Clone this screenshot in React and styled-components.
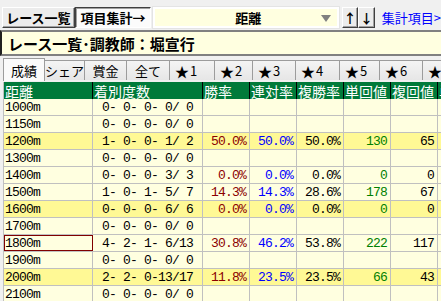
import React from "react";
import styled, { createGlobalStyle } from "styled-components";

const Global = createGlobalStyle`
  html, body { margin: 0; padding: 0; background: #f0f0f0; overflow: hidden; }
  body { font-family: "Noto Sans CJK JP", "Liberation Sans", sans-serif; }
`;

const Page = styled.div`
  width: 441px;
  height: 301px;
  overflow: hidden;
  background: #f0f0f0;
  padding-top: 7px;
  box-sizing: border-box;
`;

const Toolbar = styled.div`
  display: flex;
  align-items: stretch;
  height: 21px;
  padding-left: 2px;
  white-space: nowrap;
`;

const ToolButton = styled.div`
  display: flex;
  align-items: center;
  justify-content: center;
  box-sizing: border-box;
  width: ${(p) => p.$w}px;
  margin-right: ${(p) => p.$mr || 0}px;
  font-size: 13px;
  font-weight: bold;
  color: #000;
  background: ${(p) => (p.$pressed ? "#fbfbfb" : "#ececec")};
  border-style: solid;
  border-width: 1px;
  border-color: ${(p) =>
    p.$pressed ? "#404040 #ffffff #ffffff #404040" : "#ffffff #404040 #404040 #ffffff"};
  box-shadow: ${(p) =>
    p.$pressed ? "inset 1px 1px 0 #a0a0a0" : "inset -1px -1px 0 #a0a0a0"};
`;

const Dropdown = styled.div`
  position: relative;
  box-sizing: border-box;
  width: 189px;
  margin: 0 3px 0 2px;
  background: #ffffe0;
  border: 2px solid #ffffff;
  outline: 1px solid #e4e4e4;
  display: flex;
  align-items: center;
  padding-left: 80px;
  font-size: 13px;
  font-weight: bold;
`;

const DropArrow = styled.svg`
  position: absolute;
  right: 6px;
  top: 6px;
`;

const LinkText = styled.div`
  display: flex;
  align-items: center;
  margin-left: 7px;
  color: #0000ff;
  font-size: 13px;
`;

const TitleBox = styled.div`
  margin-top: 2px;
  height: 26px;
  box-sizing: border-box;
  background: #ffffe0;
  border-top: 2px solid #808080;
  border-bottom: 2px solid #808080;
  border-left: 2px solid #202020;
  display: flex;
  align-items: center;
  padding-left: 6px;
  font-size: 15px;
  font-weight: bold;
  color: #000;
  white-space: nowrap;
`;

const TabStrip = styled.div`
  display: flex;
  align-items: flex-end;
  height: 23px;
  padding-left: 3px;
  margin-top: 1px;
  white-space: nowrap;
`;

const Tab = styled.div`
  box-sizing: border-box;
  flex: none;
  width: ${(p) => p.$w}px;
  height: ${(p) => (p.$active ? 23 : 20)}px;
  display: flex;
  align-items: center;
  justify-content: ${(p) => (p.$center ? "center" : "flex-start")};
  padding-left: ${(p) => (p.$center ? 0 : 5)}px;
  font-size: 13px;
  color: #000;
  background: ${(p) => (p.$active ? "#fafafa" : "linear-gradient(#f4f4f4, #e6e6e6)")};
  border: 1px solid #9c9c9c;
  border-bottom: none;
  border-left: ${(p) => (p.$first || p.$active ? "1px solid #9c9c9c" : "none")};
  margin-bottom: ${(p) => (p.$active ? -1 : 0)}px;
  z-index: ${(p) => (p.$active ? 1 : 0)};
`;

const Star = styled.span`
  font-size: 14px;
  margin-right: 1px;
`;

const Table = styled.div`
  margin-top: 2px;
  margin-left: 3px;
  border-left: 1px solid #c0c0c0;
  width: 540px;
`;

const Row = styled.div`
  display: flex;
  height: 17px;
  box-sizing: border-box;
  background: ${(p) => (p.$head ? "#007a3a" : p.$hl ? "#fff995" : "#ffffe0")};
  border-bottom: ${(p) => (p.$head ? "none" : "1px solid #c0c0c0")};
`;

const Cell = styled.div`
  position: relative;
  box-sizing: border-box;
  flex: none;
  width: ${(p) => p.$w}px;
  border-right: 1px solid ${(p) => (p.$head ? "#000" : "#c0c0c0")};
  display: flex;
  align-items: center;
  justify-content: ${(p) => (p.$align === "right" ? "flex-end" : p.$align === "center" ? "center" : "flex-start")};
  padding: 0 ${(p) => (p.$align === "right" ? 3 : 0)}px 0 ${(p) => (p.$align === "left" ? 1 : 0)}px;
  font-family: ${(p) =>
    p.$head ? '"Noto Sans CJK JP", sans-serif' : '"Liberation Mono", "Noto Sans CJK JP", monospace'};
  font-size: ${(p) => (p.$head ? 14 : 13)}px;
  letter-spacing: ${(p) => (p.$head ? 0 : -0.8)}px;
  color: ${(p) => (p.$head ? "#fff" : p.$color || "#000")};
  white-space: pre;
  overflow: hidden;
  outline: ${(p) => (p.$focus ? "1px solid #800000" : "none")};
  outline-offset: -1px;
`;

const widths = [89, 110, 47, 47, 47, 47, 47, 47];
const heads = ["距離", "着別度数", "勝率", "連対率", "複勝率", "単回値", "複回値", "単"];

const rows = [
  ["1000m", "0- 0- 0- 0/ 0", "", "", "", "", ""],
  ["1150m", "0- 0- 0- 0/ 0", "", "", "", "", ""],
  ["1200m", "1- 0- 0- 1/ 2", "50.0%", "50.0%", "50.0%", "130", "65", true],
  ["1300m", "0- 0- 0- 0/ 0", "", "", "", "", ""],
  ["1400m", "0- 0- 0- 3/ 3", "0.0%", "0.0%", "0.0%", "0", "0"],
  ["1500m", "1- 0- 1- 5/ 7", "14.3%", "14.3%", "28.6%", "178", "67"],
  ["1600m", "0- 0- 0- 6/ 6", "0.0%", "0.0%", "0.0%", "0", "0", true],
  ["1700m", "0- 0- 0- 0/ 0", "", "", "", "", ""],
  ["1800m", "4- 2- 1- 6/13", "30.8%", "46.2%", "53.8%", "222", "117", false, true],
  ["1900m", "0- 0- 0- 0/ 0", "", "", "", "", ""],
  ["2000m", "2- 2- 0-13/17", "11.8%", "23.5%", "23.5%", "66", "43", true],
  ["2100m", "0- 0- 0- 0/ 0", "", "", "", "", ""],
];

const colors = ["#000", "#000", "#8b0000", "#0000ff", "#000", "#008000", "#000", "#000"];

const tabs = [
  { label: "成績", w: 42, active: true, first: true },
  { label: "シェア", w: 40 },
  { label: "賞金", w: 42 },
  { label: "全て", w: 43 },
  { label: "1", star: true, w: 45 },
  { label: "2", star: true, w: 38 },
  { label: "3", star: true, w: 43 },
  { label: "4", star: true, w: 44 },
  { label: "5", star: true, w: 40 },
  { label: "6", star: true, w: 43 },
  { label: "", star: true, w: 40 },
];

export default function App() {
  return (
    <Page>
      <Global />
      <Toolbar>
        <ToolButton $w={75}>レース一覧</ToolButton>
        <ToolButton $w={79} $pressed>項目集計→</ToolButton>
        <Dropdown>
          距離
          <DropArrow width="10" height="8" viewBox="0 0 10 8">
            <polygon points="0,0 10,0 5,7" fill="#808080" />
          </DropArrow>
        </Dropdown>
        <ToolButton $w={17}>↑</ToolButton>
        <ToolButton $w={17}>↓</ToolButton>
        <LinkText>集計項目&gt;</LinkText>
      </Toolbar>
      <TitleBox>レース一覧･調教師：堀宣行</TitleBox>
      <TabStrip>
        {tabs.map((t, i) => (
          <Tab key={i} $w={t.w} $active={t.active} $first={t.first} $center={!t.star}>
            {t.star && <Star>★</Star>}
            {t.label}
          </Tab>
        ))}
      </TabStrip>
      <Table>
        <Row $head>
          {heads.map((h, i) => (
            <Cell key={i} $head $w={widths[i]} $align="left">
              {h}
            </Cell>
          ))}
        </Row>
        {rows.map((r, ri) => (
          <Row key={ri} $hl={r[7]}>
            {widths.map((w, ci) => (
              <Cell
                key={ci}
                $w={w}
                $align={ci === 0 ? "left" : ci === 1 ? "center" : "right"}
                $color={colors[ci]}
                $focus={ci === 0 && r[8]}
              >
                {ci < 7 ? r[ci] : ""}
              </Cell>
            ))}
          </Row>
        ))}
      </Table>
    </Page>
  );
}
